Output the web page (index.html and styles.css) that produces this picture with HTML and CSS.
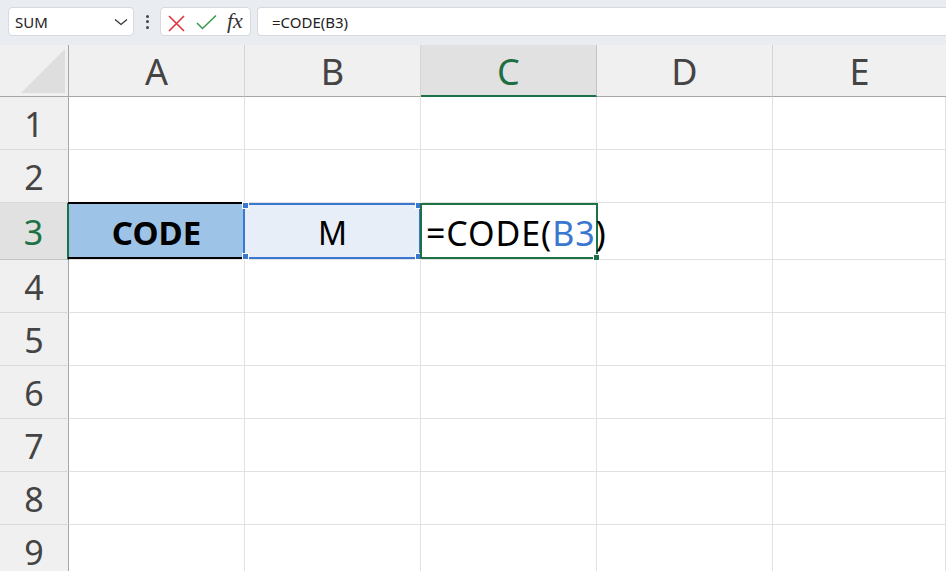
FILE: index.html
```html
<!DOCTYPE html>
<html>
<head>
<meta charset="utf-8">
<link rel="stylesheet" href="styles.css">
</head>
<body>
<div class="topbar">
  <div class="namebox">
    <span class="name">SUM</span>
    <svg class="chev" width="14" height="8" viewBox="0 0 14 8"><polyline points="1,1.5 7,6.5 13,1.5" fill="none" stroke="#333" stroke-width="1.3"/></svg>
  </div>
  <div class="dots"><i></i><i></i><i></i></div>
  <div class="fxbox">
    <svg class="marks" width="60" height="27" viewBox="0 0 60 27">
      <path d="M8 8 L23 23 M23 8 L8 23" stroke="#e0343c" stroke-width="1.6" fill="none"/>
      <path d="M36 15 L41.5 20.5 L55 7.5" stroke="#3d9a4e" stroke-width="1.6" fill="none"/>
    </svg>
    <span class="fx">fx</span>
  </div>
  <div class="formula">=CODE(B3)</div>
</div>
<div class="sheet">
  <div class="corner"><svg width="45" height="45" viewBox="0 0 45 45"><polygon points="0,44 44,0 44,44" fill="#dedede"/></svg></div>
  <div class="ch">A</div>
  <div class="ch">B</div>
  <div class="ch sel">C</div>
  <div class="ch">D</div>
  <div class="ch last">E</div>

  <div class="rh">1</div><div class="c"></div><div class="c"></div><div class="c"></div><div class="c"></div><div class="c"></div>
  <div class="rh">2</div><div class="c"></div><div class="c"></div><div class="c"></div><div class="c"></div><div class="c"></div>
  <div class="rh sel">3</div>
  <div class="c a3"><span class="edge top"></span><span class="edge bottom"></span>CODE</div>
  <div class="c b3"><span class="ref"><i class="h tl"></i><i class="h tr"></i><i class="h bl"></i><i class="h br"></i></span>M</div>
  <div class="c c3"><span class="active"><i class="fill"></i></span><span class="edit">=CODE(<span class="refc">B3</span>)</span></div>
  <div class="c"></div><div class="c"></div>
  <div class="rh">4</div><div class="c"></div><div class="c"></div><div class="c"></div><div class="c"></div><div class="c"></div>
  <div class="rh">5</div><div class="c"></div><div class="c"></div><div class="c"></div><div class="c"></div><div class="c"></div>
  <div class="rh">6</div><div class="c"></div><div class="c"></div><div class="c"></div><div class="c"></div><div class="c"></div>
  <div class="rh">7</div><div class="c"></div><div class="c"></div><div class="c"></div><div class="c"></div><div class="c"></div>
  <div class="rh">8</div><div class="c"></div><div class="c"></div><div class="c"></div><div class="c"></div><div class="c"></div>
  <div class="rh">9</div><div class="c"></div><div class="c"></div><div class="c"></div><div class="c"></div><div class="c"></div>
</div>
</body>
</html>
```
FILE: styles.css
```css
* { box-sizing: border-box; }
html, body { margin: 0; padding: 0; }
body {
  width: 946px;
  height: 571px;
  overflow: hidden;
  background: #ffffff;
  font-family: "Noto Sans", "Open Sans", sans-serif;
}
.topbar {
  height: 45px;
  background: #e9edf1;
  display: flex;
  align-items: flex-start;
  padding: 7px 0 0 8px;
}
.namebox {
  width: 126px;
  height: 29px;
  background: #fff;
  border: 1px solid #d6d9dd;
  border-radius: 4px;
  display: flex;
  align-items: center;
  justify-content: space-between;
  padding: 0 5px 0 6px;
  font-size: 15px;
  color: #222;
}
.chev { margin-top: 1px; }
.dots {
  width: 26px;
  height: 29px;
  display: flex;
  flex-direction: column;
  align-items: center;
  justify-content: center;
  gap: 2.5px;
}
.dots i {
  display: block;
  width: 3px;
  height: 3px;
  border-radius: 50%;
  background: #444;
}
.fxbox {
  width: 91px;
  height: 29px;
  background: #fff;
  border: 1px solid #d6d9dd;
  border-radius: 4px;
  display: flex;
  align-items: center;
}
.marks { display: block; }
.fx {
  margin-left: 6px;
  font-family: "Liberation Serif", "DejaVu Serif", serif;
  font-style: italic;
  font-size: 22px;
  color: #333;
  line-height: 1;
  margin-top: -2px;
}
.formula {
  margin-left: 6px;
  flex: 1;
  height: 29px;
  background: #fff;
  border: 1px solid #d6d9dd;
  border-right: none;
  border-radius: 4px 0 0 4px;
  font-size: 15px;
  color: #222;
  display: flex;
  align-items: center;
  padding-left: 14px;
}
.sheet {
  display: grid;
  grid-template-columns: 69px 176px 176px 176px 176px 1fr;
  grid-template-rows: 52px 53px 53px 57px 53px 53px 53px 53px 53px 53px;
}
.corner {
  background: #f0f0f0;
  border-right: 1px solid #a6a6a6;
  border-bottom: 1px solid #a6a6a6;
  padding: 4px 0 0 21px;
}
.corner svg { display: block; }
.ch {
  background: #f0f0f0;
  border-right: 1px solid #d4d4d4;
  border-bottom: 1px solid #a6a6a6;
  display: flex;
  align-items: center;
  justify-content: center;
  font-size: 36px;
  color: #444;
  padding-top: 2px;
}
.ch.sel {
  background: #e1e1e1;
  color: #1e6e41;
  border-bottom: 2px solid #1e7145;
  border-right-color: #c4c4c4;
}
.ch.last { border-right: none; }
.rh {
  background: #f0f0f0;
  border-right: 1px solid #a6a6a6;
  border-bottom: 1px solid #d9d9d9;
  display: flex;
  align-items: center;
  justify-content: center;
  font-size: 34px;
  color: #444;
  padding-top: 2px;
}
.rh.sel {
  background: #e1e1e1;
  color: #1e7145;
  border-right: 2px solid #1e7145;
  border-bottom-color: #c4c4c4;
}
.c {
  position: relative;
  border-right: 1px solid #e1e1e1;
  border-bottom: 1px solid #e1e1e1;
  display: flex;
  align-items: center;
  justify-content: center;
  font-size: 32px;
  color: #000;
  padding-top: 3px;
}
.a3 {
  background: #9dc3e6;
  font-weight: 700;
  font-size: 33px;
}
.edge {
  position: absolute;
  left: -1px;
  right: -1px;
  height: 2px;
  background: #000;
}
.edge.top { top: -1px; }
.edge.bottom { bottom: 0; }
.b3 {
  background: #e8eef8;
}
.ref {
  position: absolute;
  left: -2px;
  top: 0;
  right: -1px;
  bottom: 0;
  border: 2px solid #3a77d1;
}
.h {
  position: absolute;
  width: 7px;
  height: 7px;
  background: #3a77d1;
  border: 1px solid #fff;
}
.h.tl { left: -3px; top: -3px; }
.h.tr { right: -3px; top: -3px; }
.h.bl { left: -3px; bottom: -3px; }
.h.br { right: -3px; bottom: -3px; }
.c3 {
  justify-content: flex-start;
  overflow: visible;
  padding-left: 5px;
  z-index: 2;
}
.active {
  position: absolute;
  left: -1px;
  top: 0;
  right: -2px;
  bottom: 0;
  border: 2px solid #1e7145;
}
.fill {
  position: absolute;
  right: -4px;
  bottom: -4px;
  width: 7px;
  height: 7px;
  background: #1e7145;
  border: 1px solid #fff;
}
.edit {
  position: relative;
  white-space: nowrap;
  font-size: 34px;
  letter-spacing: 0.9px;
}
.refc { color: #3a77d1; }
```
